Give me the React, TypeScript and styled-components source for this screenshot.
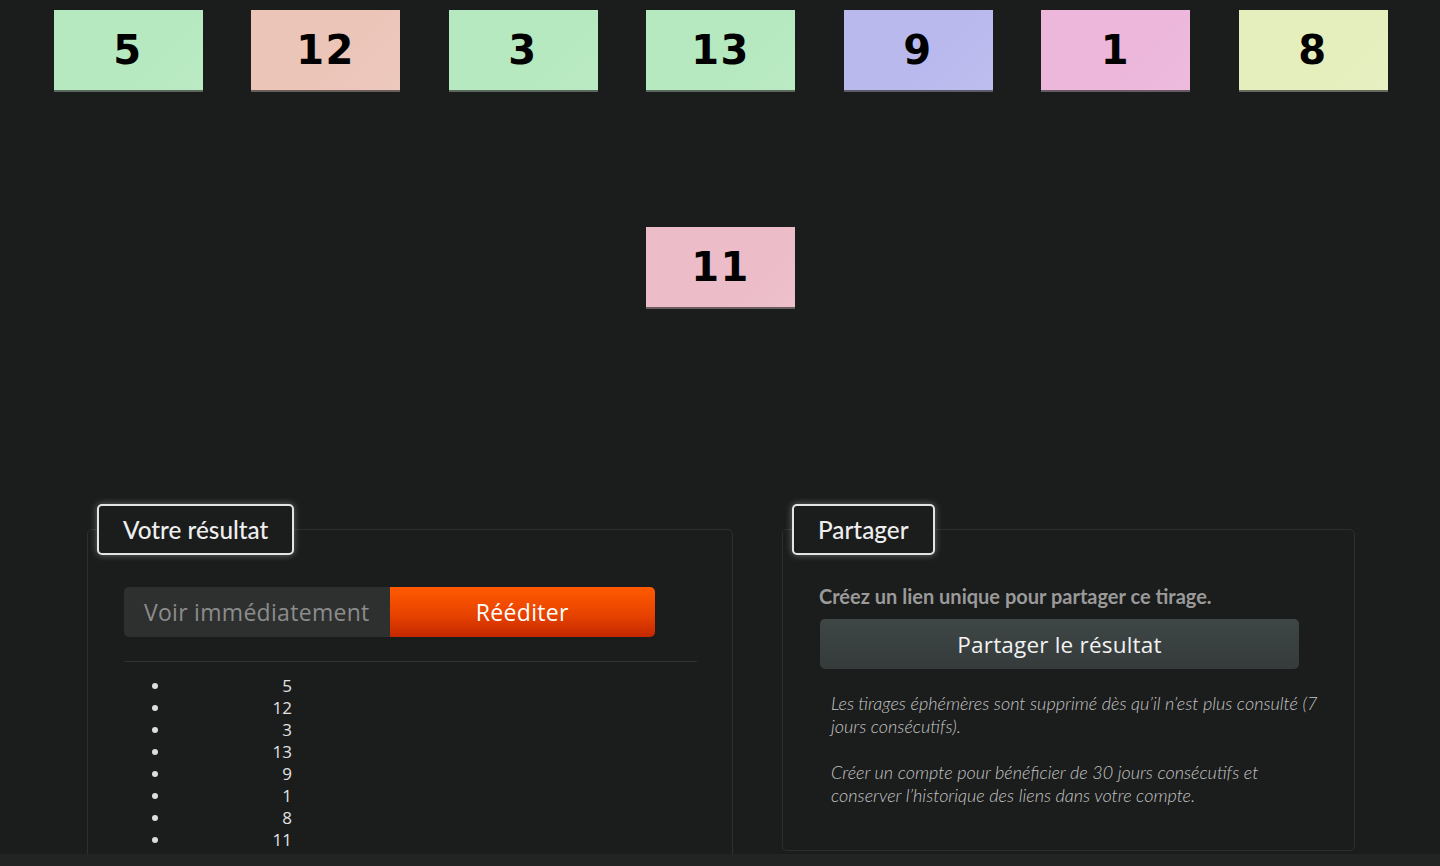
import React from "react";
import styled, { createGlobalStyle } from "styled-components";

const Global = createGlobalStyle`
  html, body { margin: 0; padding: 0; background: #1b1c1c; }
  body { font-family: "Open Sans", "Noto Sans", sans-serif; color: #ddd; overflow: hidden; }
  * { box-sizing: border-box; }
`;

const Page = styled.div`
  width: 1440px;
  height: 866px;
  padding-top: 10px;
  background: #1b1c1c;
  overflow: hidden;
`;

const Cards = styled.div`
  display: flex;
  flex-wrap: wrap;
  justify-content: center;
  column-gap: 48.5px;
  row-gap: 135px;
  width: 1440px;
  padding-left: 1px;
`;

const Card = styled.div<{ $bg: string }>`
  width: 149px;
  height: 82px;
  display: flex;
  align-items: center;
  justify-content: center;
  background: linear-gradient(135deg, ${(p) => p.$bg} 0%, ${(p) => p.$bg} 60%, rgba(255,255,255,0.06) 100%), ${(p) => p.$bg};
  border-bottom: 2px solid rgba(60, 60, 60, 0.75);
  font-family: "DejaVu Sans", Verdana, sans-serif;
  font-weight: 700;
  font-size: 40px;
  color: #000;
  letter-spacing: 1.5px;
`;

const Panels = styled.div`
  display: flex;
  gap: 49px;
  margin-top: 195px;
  padding-left: 87px;
`;

const Panel = styled.fieldset<{ $w: number; $h: number; $pr: number }>`
  margin: 0;
  width: ${(p) => p.$w}px;
  height: ${(p) => p.$h}px;
  border: 1px solid #2d2e2e;
  border-radius: 5px;
  padding: 0 ${(p) => p.$pr}px 0 36px;
  min-width: 0;
`;

const Legend = styled.legend`
  margin-left: -27px;
  padding: 0 24px;
  height: 51px;
  line-height: 47px;
  border: 2px solid #e4e4e4;
  border-radius: 5px;
  box-shadow: 0 0 7px rgba(255, 255, 255, 0.35);
  font-family: Lato, "Noto Sans", sans-serif;
  font-weight: 500;
  font-size: 24.3px;
  color: #eee;
  background: #1b1c1c;
`;

const ButtonGroup = styled.div`
  display: flex;
  width: 531px;
  height: 50px;
  margin-top: 32px;
`;

const Segment = styled.button<{ $active?: boolean }>`
  flex: 1;
  border: none;
  font-family: "Open Sans", sans-serif;
  font-size: 23px;
  letter-spacing: 0.3px;
  cursor: pointer;
  color: ${(p) => (p.$active ? "#fff" : "#8c8c8c")};
  background: ${(p) =>
    p.$active ? "linear-gradient(180deg, #ff5a00 0%, #e84300 55%, #c42800 100%)" : "#2e302f"};
  border-radius: ${(p) => (p.$active ? "0 5px 5px 0" : "5px 0 0 5px")};
`;

const Rule = styled.hr`
  border: none;
  border-top: 1px solid #303131;
  margin: 24px 0 0 0;
`;

const List = styled.ul`
  margin: 13px 0 0 0;
  padding: 0 0 0 47px;
  list-style: disc;
  font-family: "Open Sans", sans-serif;
  font-size: 17px;
  line-height: 22px;
  color: #e2e2e2;
`;

const Item = styled.li`
  width: 121px;
  text-align: right;
  &::marker { color: #ddd; }
`;

const Lead = styled.p`
  margin: 29px 0 0 0;
  font-family: Lato, sans-serif;
  font-weight: 700;
  font-size: 20px;
  color: #9a9a9a;
  line-height: 24px;
`;

const ShareButton = styled.button`
  display: block;
  width: 479px;
  height: 50px;
  margin-top: 11px;
  margin-left: 1px;
  border: none;
  border-radius: 5px;
  background: linear-gradient(180deg, #3f4646 0%, #353b3b 100%);
  color: #f2f2f2;
  font-family: "Open Sans", sans-serif;
  font-size: 22.5px;
  letter-spacing: 0.2px;
  cursor: pointer;
`;

const Note = styled.p<{ $mt: number }>`
  margin: ${(p) => p.$mt}px 0 0 12px;
  font-family: Lato, sans-serif;
  font-style: italic;
  font-weight: 300;
  font-size: 18px;
  line-height: 23px;
  color: #c4c4c4;
  white-space: nowrap;
`;

const Footer = styled.div`
  position: fixed;
  left: 0;
  right: 0;
  bottom: 0;
  height: 12px;
  background: #222323;
`;

const draws: { n: number; c: string }[] = [
  { n: 5, c: "#b6e9bf" },
  { n: 12, c: "#ecc5b9" },
  { n: 3, c: "#b6e9bf" },
  { n: 13, c: "#b6e9bf" },
  { n: 9, c: "#b9b9ee" },
  { n: 1, c: "#ecb7db" },
  { n: 8, c: "#e5efbd" },
  { n: 11, c: "#ecbcc8" },
];

export default function App() {
  return (
    <Page>
      <Global />
      <Cards>
        {draws.map((d, i) => (
          <Card key={i} $bg={d.c}>
            {d.n}
          </Card>
        ))}
      </Cards>
      <Panels>
        <Panel $w={646} $h={370} $pr={35}>
          <Legend>Votre résultat</Legend>
          <ButtonGroup>
            <Segment>Voir immédiatement</Segment>
            <Segment $active>Rééditer</Segment>
          </ButtonGroup>
          <Rule />
          <List>
            {draws.map((d, i) => (
              <Item key={i}>{d.n}</Item>
            ))}
          </List>
        </Panel>
        <Panel $w={573} $h={347} $pr={55}>
          <Legend>Partager</Legend>
          <Lead>Créez un lien unique pour partager ce tirage.</Lead>
          <ShareButton>Partager le résultat</ShareButton>
          <Note $mt={23}>
            Les tirages éphémères sont supprimé dès qu’il n’est plus consulté (7
            <br />
            jours consécutifs).
          </Note>
          <Note $mt={23}>
            Créer un compte pour bénéficier de 30 jours consécutifs et
            <br />
            conserver l’historique des liens dans votre compte.
          </Note>
        </Panel>
      </Panels>
      <Footer />
    </Page>
  );
}
